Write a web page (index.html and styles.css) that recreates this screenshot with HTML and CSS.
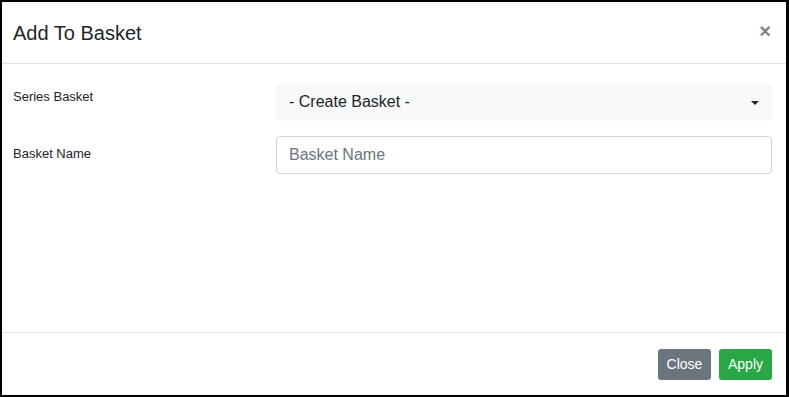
FILE: index.html
```html
<!DOCTYPE html>
<html>
<head>
<meta charset="utf-8">
<link rel="stylesheet" href="styles.css">
</head>
<body>
<div class="modal">
  <div class="modal-header">
    <h5 class="modal-title">Add To Basket</h5>
    <span class="close">&times;</span>
  </div>
  <div class="modal-body">
    <div class="form-row">
      <label class="label label-a">Series Basket</label>
      <div class="select">
        <span>- Create Basket -</span>
        <span class="caret"></span>
      </div>
    </div>
    <div class="form-row">
      <label class="label label-b">Basket Name</label>
      <div class="input">Basket Name</div>
    </div>
  </div>
  <div class="modal-footer">
    <button class="btn btn-secondary">Close</button>
    <button class="btn btn-success">Apply</button>
  </div>
</div>
</body>
</html>
```
FILE: styles.css
```css
* { box-sizing: border-box; }
html, body { margin: 0; padding: 0; }
body {
  font-family: "Liberation Sans", Arial, sans-serif;
  color: #212529;
  background: #fff;
}
.modal {
  width: 789px;
  height: 397px;
  border-style: solid;
  border-color: #000;
  border-width: 2px 3px 2px 2px;
  display: flex;
  flex-direction: column;
  background: #fff;
}
.modal-header {
  height: 62px;
  border-bottom: 1px solid #dee2e6;
  display: flex;
  align-items: center;
  justify-content: space-between;
  padding: 0 14px 0 11px;
}
.modal-title {
  margin: 0;
  font-size: 20px;
  font-weight: 400;
  line-height: 30px;
}
.close {
  font-size: 20px;
  font-weight: 700;
  color: #000;
  opacity: .5;
  line-height: 1;
  margin-top: -4px;
  margin-right: 1px;
}
.modal-body {
  flex: 1;
  padding: 19px 14px 0 11px;
  display: flex;
  flex-direction: column;
  gap: 15px;
}
.form-row {
  display: grid;
  grid-template-columns: 263px 1fr;
  align-items: start;
}
.label {
  font-size: 13px;
  line-height: 19px;
}
.label-a { padding-top: 4px; }
.label-b { padding-top: 8px; }
.select {
  height: 38px;
  background: #f8f9fa;
  border-radius: 4px;
  display: flex;
  align-items: center;
  justify-content: space-between;
  padding: 0 13px 0 13px;
  font-size: 16px;
  color: #212529;
}
.caret {
  width: 0;
  height: 0;
  border-left: 4px solid transparent;
  border-right: 4px solid transparent;
  border-top: 4px solid #222;
  margin-top: 1px;
}
.input {
  height: 38px;
  border: 1px solid #ced4da;
  border-radius: 4px;
  display: flex;
  align-items: center;
  padding: 0 12px;
  font-size: 16px;
  color: #6c757d;
}
.modal-footer {
  height: 63px;
  border-top: 1px solid #dee2e6;
  display: flex;
  justify-content: flex-end;
  align-items: flex-start;
  gap: 8px;
  padding: 16px 14px 0 0;
}
.btn {
  font-family: "Liberation Sans", Arial, sans-serif;
  height: 31px;
  border: none;
  border-radius: 3px;
  color: #fff;
  font-size: 14px;
  padding: 0 7px;
  line-height: 31px;
}
.btn-secondary { background: #6c757d; width: 53px; }
.btn-success { background: #28a745; width: 53px; }
```
